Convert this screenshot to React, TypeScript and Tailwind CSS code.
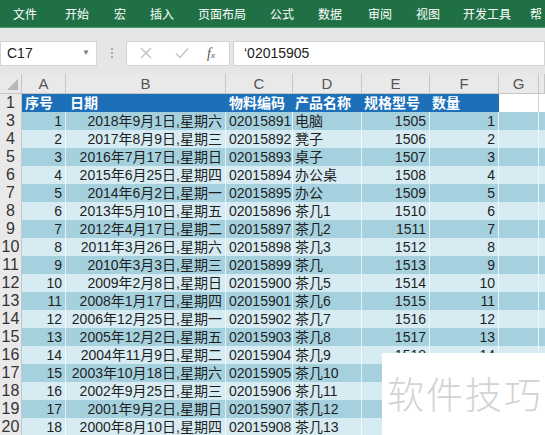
import React from 'react';

const tabs = ['文件', '开始', '宏', '插入', '页面布局', '公式', '数据', '审阅', '视图', '开发工具', '帮'];
const tabX = [13, 65, 114, 150, 198, 270, 318, 368, 416, 463, 530];

const rows: [string, string, string, string][] = [
  ['2018年9月1日,星期六', '02015891', '电脑', '1505'],
  ['2017年8月9日,星期三', '02015892', '凳子', '1506'],
  ['2016年7月17日,星期日', '02015893', '桌子', '1507'],
  ['2015年6月25日,星期四', '02015894', '办公桌', '1508'],
  ['2014年6月2日,星期一', '02015895', '办公', '1509'],
  ['2013年5月10日,星期五', '02015896', '茶几1', '1510'],
  ['2012年4月17日,星期二', '02015897', '茶几2', '1511'],
  ['2011年3月26日,星期六', '02015898', '茶几3', '1512'],
  ['2010年3月3日,星期三', '02015899', '茶几', '1513'],
  ['2009年2月8日,星期日', '02015900', '茶几5', '1514'],
  ['2008年1月17日,星期四', '02015901', '茶几6', '1515'],
  ['2006年12月25日,星期一', '02015902', '茶几7', '1516'],
  ['2005年12月2日,星期五', '02015903', '茶几8', '1517'],
  ['2004年11月9日,星期二', '02015904', '茶几9', '1518'],
  ['2003年10月18日,星期六', '02015905', '茶几10', '1519'],
  ['2002年9月25日,星期三', '02015906', '茶几11', '1520'],
  ['2001年9月2日,星期日', '02015907', '茶几12', '1521'],
  ['2000年8月10日,星期四', '02015908', '茶几13', '1522'],
];

const cols = 'grid grid-cols-[22px_44px_160px_67px_69px_68px_69px_40px_1fr]';
const font = { fontFamily: '"Liberation Sans", "Noto Sans CJK SC", sans-serif' };

const App: React.FC = () => {
  return (
    <div className="relative w-[545px] h-[435px] overflow-hidden bg-white text-[#222]" style={font}>
      {/* ribbon */}
      <div className="relative h-[28px] bg-[#1f7145] text-white text-[12px] border-b border-[#4c9a6d]">
        {tabs.map((t, i) => (
          <span key={t} className="absolute top-[6px] whitespace-nowrap" style={{ left: tabX[i] }}>{t}</span>
        ))}
      </div>

      {/* formula bar */}
      <div className="h-[46px] bg-[#e6e6e6] flex items-center pt-[4px]">
        <div className="w-[97px] h-[25px] bg-white border border-[#d4d4d4] flex items-center pl-[6px] pr-[6px] text-[14px]">
          <span className="flex-1">C17</span>
          <span className="text-[#777] text-[8px]">▼</span>
        </div>
        <div className="w-[29px] flex flex-col items-center gap-[2px]">
          <span className="w-[2px] h-[2px] bg-[#aaa]" />
          <span className="w-[2px] h-[2px] bg-[#aaa]" />
          <span className="w-[2px] h-[2px] bg-[#aaa]" />
        </div>
        <div className="w-[104px] h-[25px] bg-white border border-[#d4d4d4] flex items-center">
          <svg width="12" height="12" viewBox="0 0 12 12" className="ml-[13px]">
            <path d="M1 1L11 11M11 1L1 11" stroke="#c4c4c4" strokeWidth="1.5" fill="none" />
          </svg>
          <svg width="14" height="12" viewBox="0 0 14 12" className="ml-[23px]">
            <path d="M1 6.5L5 10.5L13 1.5" stroke="#c4c4c4" strokeWidth="1.5" fill="none" />
          </svg>
          <span className="ml-[18px] text-[14px] italic text-[#555]" style={{ fontFamily: '"Liberation Serif", serif' }}>
            f<span className="text-[9px]">x</span>
          </span>
        </div>
        <div className="flex-1 h-[25px] bg-white border border-[#d4d4d4] ml-[3px] flex items-center pl-[10px] text-[14px]">
          ‘02015905
        </div>
      </div>

      {/* column headers */}
      <div className={`${cols} h-[20px] bg-[#e9e9e9] border-b border-[#c6c6c6] text-[15px] text-[#555]`}>
        <div className="relative border-r border-[#c6c6c6]">
          <div className="absolute right-[3px] bottom-[3px] w-0 h-0 border-l-[11px] border-l-transparent border-b-[11px] border-b-[#b6b6b6]" />
        </div>
        {['A', 'B', 'C', 'D', 'E', 'F', 'G', ''].map((c, i) => (
          <div key={i} className="flex items-center justify-center border-r border-[#c6c6c6] leading-none">{c}</div>
        ))}
      </div>

      {/* header row */}
      <div className={`${cols} h-[18px] text-[14px] leading-[18px]`}>
        <div className="bg-[#e9e9e9] border-r border-b border-[#c6c6c6] text-center text-[16px] text-[#333]">1</div>
        <div className="bg-[#1d6fb8] text-white font-bold pl-[3px]">序号</div>
        <div className="bg-[#1d6fb8] text-white font-bold pl-[4px]">日期</div>
        <div className="bg-[#1d6fb8] text-white font-bold pl-[3px]">物料编码</div>
        <div className="bg-[#1d6fb8] text-white font-bold pl-[2px]">产品名称</div>
        <div className="bg-[#1d6fb8] text-white font-bold pl-[2px]">规格型号</div>
        <div className="bg-[#1d6fb8] text-white font-bold pl-[2px]">数量</div>
        <div className="bg-white border-r border-b border-[#d4d4d4]" />
        <div className="bg-white" />
      </div>

      {/* data rows; E/F of rows 17-20 sit under the watermark box */}
      {rows.map((r, i) => {
        const bg = i % 2 === 0 ? 'bg-[#a5d1df]' : 'bg-[#d6ebf2]';
        const hidden = i >= 14;
        return (
          <div key={i} className={`${cols} h-[18px] text-[14px] leading-[18px] text-[#1f1f1f]`}>
            <div className="bg-[#e9e9e9] border-r border-b border-[#c6c6c6] text-center text-[16px] text-[#333]">{i + 3}</div>
            <div className={`${bg} border-r border-white/70 text-right pr-[3px]`}>{i + 1}</div>
            <div className={`${bg} border-r border-white/70 text-right pr-[3px] whitespace-nowrap`}>{r[0]}</div>
            <div className={`${bg} border-r border-white/70 pl-[3px]`}>{r[1]}</div>
            <div className={`${bg} border-r border-white/70 pl-[2px] whitespace-nowrap`}>{r[2]}</div>
            <div className={`${bg} border-r border-white/70 text-right pr-[3px]`}>{hidden ? '' : r[3]}</div>
            <div className={`${bg} border-r border-white/70 text-right pr-[3px]`}>{hidden ? '' : i + 1}</div>
            <div className={`${bg} border-r border-white/70`} />
            <div className={bg} />
          </div>
        );
      })}

      {/* watermark */}
      <div className="absolute left-[382px] top-[353px] right-0 bottom-0 bg-white flex items-center pl-[5px]">
        <span className="text-[37px] font-light tracking-[2px] text-[#d3d3d3] whitespace-nowrap" style={{ fontFamily: '"Noto Sans CJK SC", sans-serif' }}>
          软件技巧
        </span>
      </div>
    </div>
  );
};

export default App;
